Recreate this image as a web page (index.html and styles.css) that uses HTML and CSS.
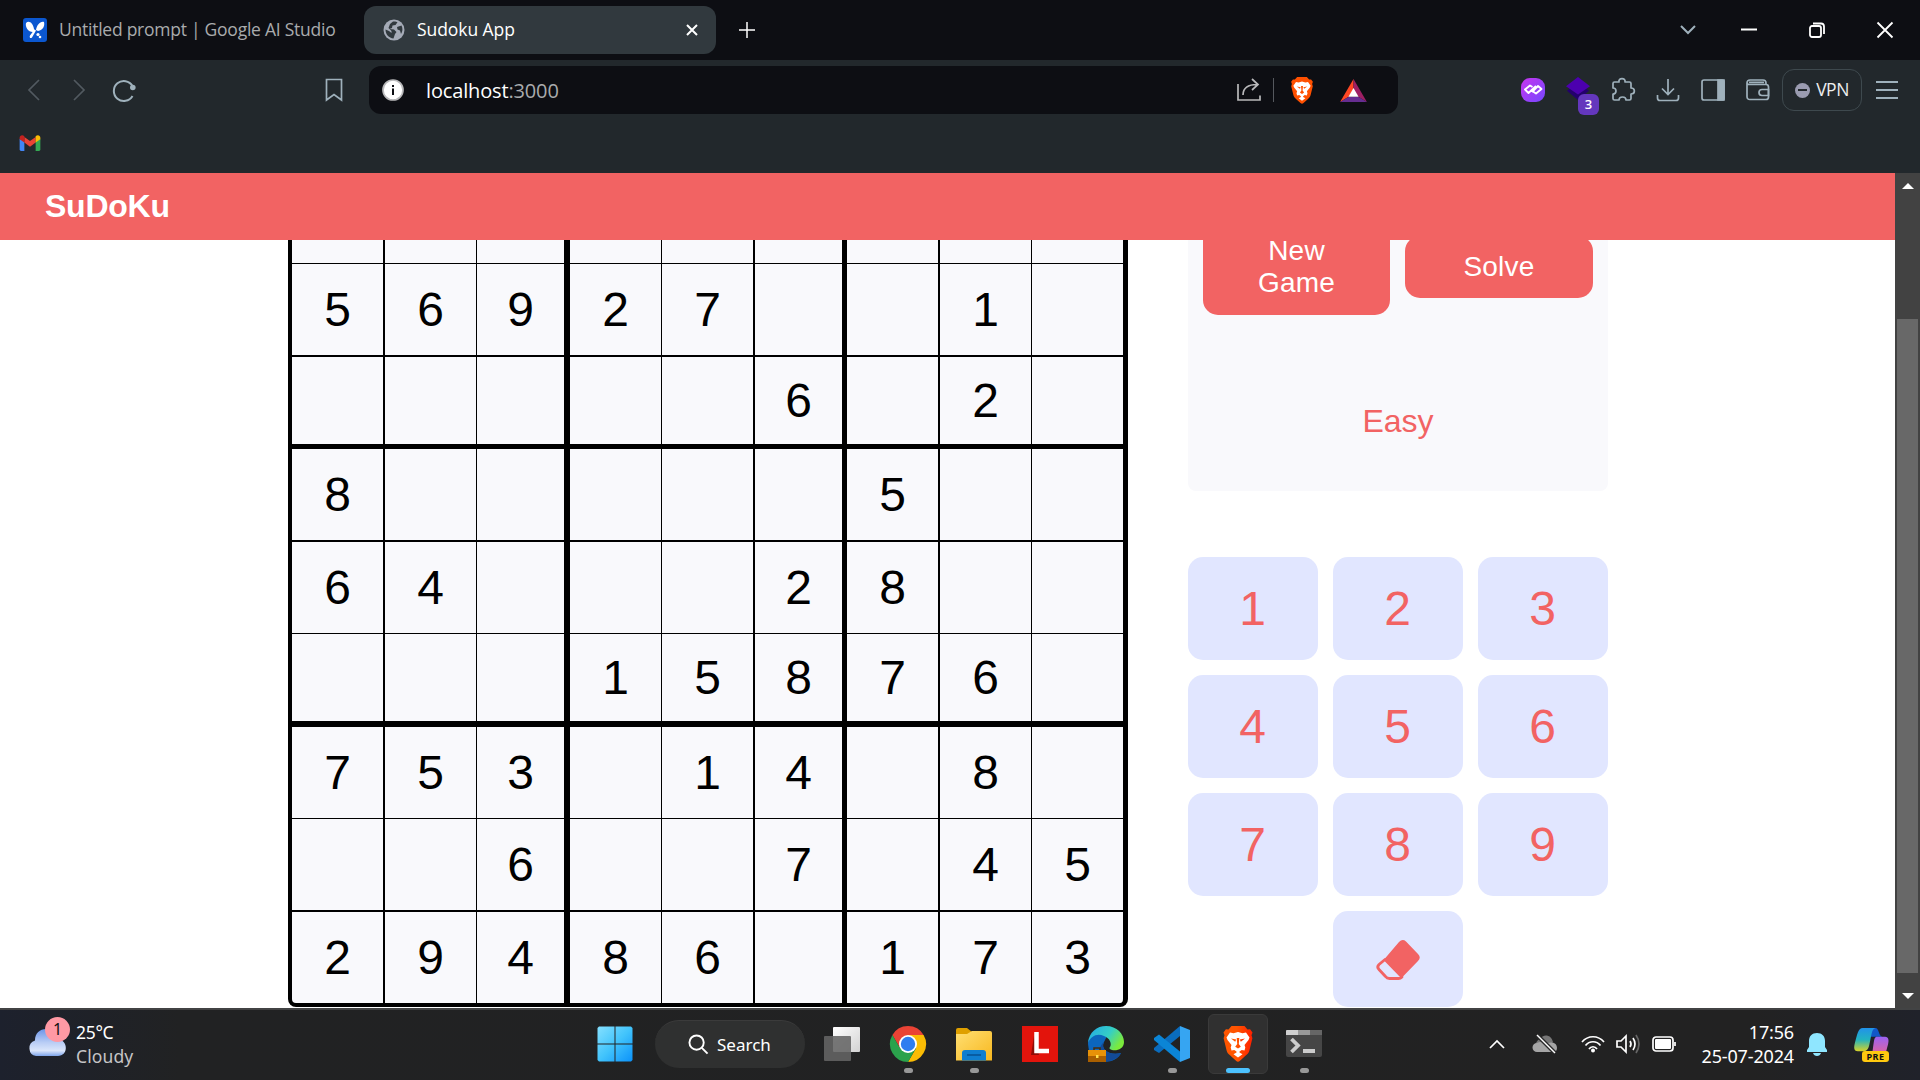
FILE: index.html
```html
<!DOCTYPE html>
<html lang="en">
<head>
<meta charset="utf-8">
<title>Sudoku App</title>
<link rel="stylesheet" href="styles.css">
</head>
<body>
<svg class="defs" width="0" height="0" aria-hidden="true">
  <defs>
    <linearGradient id="lionFill" x1="0" x2="1" y1="0" y2="0"><stop offset="0" stop-color="#f50"/><stop offset=".45" stop-color="#f50"/><stop offset="1" stop-color="#ff2000"/></linearGradient>
    <symbol id="lion" viewBox="0 0 30 36">
      <path d="M8.500 0h13l3 3.400 2.600-.2 2.400 3.200-1 2.800.9 3-3 12.200c-.5 2-1.700 3.600-3.400 4.800l-6 5.600c-1.300 1.200-2.700 1.200-4 0l-6-5.600c-1.700-1.200-2.900-2.800-3.400-4.800L.6 12.200l.9-3-1-2.800 2.400-3.200 2.600.2z"/>
      <path fill="#fff" d="M7 6.500l3.500.7L15 6l4.500 1.200 3.500-.7 3.500 5-1 2.500-4 5 .8 2.500-.8 3-2.800-.6-2.200 1.600v1l3 1.800-4.500 3.200-4.500-3.200 3-1.800v-1l-2.200-1.600-2.800.6-.8-3 .8-2.500-4-5-1-2.500z"/>
      <path d="M8 12.500l5.200 1-1 2.200zM22 12.500l-5.200 1 1 2.200zM13.700 12h2.600l-.5 6 2 2.700L15 22.500l-2.800-1.800 2-2.700z"/>
    </symbol>
  </defs>
</svg>
<div class="screen">
  <header class="tabs">
    <div class="tab">
      <svg class="studio" viewBox="0 0 24 24"><rect width="24" height="24" rx="3" fill="#0b57d0"/><path fill="#fff" d="M3 5c3-3 7 0 8 6l1 2-2 1C5 14 2 9 3 5zM21 4c1 4-1 8-6 9l-2-1c1-5 4-9 8-8zM11.500 11.500l1.500 1-4 7c-1.500 1.500-3 0-2-2z"/><circle cx="15" cy="16.500" r="1.600" fill="#fff"/><circle cx="17" cy="19" r="1.300" fill="#fff"/></svg>
      <span class="tab-title untitled">Untitled prompt | Google AI Studio</span>
    </div>
    <div class="tab active">
      <svg class="globe" viewBox="0 0 22 22"><circle cx="11" cy="11" r="10.500" fill="#a5abb7"/><path fill="#31393e" d="M10 2.500c1.500-.3 3.500 0 4.500.7L12.500 6l-3 .5-.5 2.500-2.500 1 4.500.5 2.500 2.500-1.500 2-1.500 4.500C6 19 2.500 15.500 2.500 10.500L6 12l2.500 2v-2l-3-3 1.500-4zM14 8l4.500-1.500c1.500 3 1.200 6-.5 8.500l-1-3.500-2.500-1z"/></svg>
      <span class="tab-title">Sudoku App</span>
      <svg class="close" viewBox="0 0 12 12"><path d="M1 1l10 10M11 1L1 11"/></svg>
    </div>
    <svg class="plus" viewBox="0 0 16 16"><path d="M8 0v16M0 8h16"/></svg>
    <div class="window-controls">
      <svg class="chev" viewBox="0 0 16 10"><path d="M1 1l7 7 7-7"/></svg>
      <svg viewBox="0 0 16 16"><path d="M0 7.500h16" stroke-width="2"/></svg>
      <svg viewBox="0 0 16 16"><rect x="1" y="4" width="11" height="11" rx="2" stroke-width="1.800"/><path d="M4 1.500h8a3 3 0 013 3V12" stroke-width="1.800"/></svg>
      <svg viewBox="0 0 16 16"><path d="M.5.5l15 15M15.500.5l-15 15" stroke-width="1.800"/></svg>
    </div>
  </header>
  <nav class="toolbar">
    <div class="nav-icons">
      <svg class="dim" viewBox="0 0 24 24"><path d="M17 2L7 12l10 10"/></svg>
      <svg class="dim" viewBox="0 0 24 24"><path d="M7 2l10 10L7 22"/></svg>
      <svg viewBox="0 0 24 24"><path d="M20.500 18A10 10 0 1120.500 8" stroke-width="2"/><circle cx="20.800" cy="9.500" r="2.800" fill="#9fb1bc" stroke="none"/></svg>
    </div>
    <svg class="bookmark" viewBox="0 0 20 24"><path d="M2.500 1.500h15v20.500L10 16.500 2.500 22z"/></svg>
    <div class="address">
      <svg class="info" viewBox="0 0 20 20"><circle cx="10" cy="10" r="10" fill="#fff"/><path d="M10 8.500V15M10 5v2" stroke="#0d0e13" stroke-width="2"/></svg>
      <span class="url">localhost<span>:3000</span></span>
      <svg class="share" viewBox="0 0 26 26"><path d="M2 7v16h22v-4.500M7 18C7 11 12 7.500 21 7.500M16 2l6 5.500-6 5.500"/></svg>
      <i class="divider"></i>
      <svg class="lion-small"><use href="#lion"/></svg>
      <svg class="bat" viewBox="0 0 28 24"><path fill="#ff4724" d="M14 0L0 24l9-5.500 5-8z"/><path fill="#9e1f63" d="M14 0l14 24-9-5.500-5-8z"/><path fill="#662d91" d="M0 24h28l-9-5.500H9z"/><path fill="#fff" d="M14 9.500l-5.300 9h10.600z"/></svg>
    </div>
    <div class="extensions">
      <svg viewBox="0 0 24 24"><defs><linearGradient id="violet" x2="1" y2="1"><stop stop-color="#c735ef"/><stop offset="1" stop-color="#7548ff"/></linearGradient></defs><rect width="24" height="24" rx="9" fill="url(#violet)" stroke="none"/><path stroke="#fff" stroke-width="1.900" stroke-linejoin="round" d="M11.500 9L9 7.500l-5 4 3.500 3.500L15 8M12 13.500l3 2 5.500-4.500-3.500-3-6 6"/></svg>
      <div class="badge-icon">
        <svg viewBox="0 0 26 26"><path fill="#23006d" stroke="none" d="M1 15l12-9 12 9-12 10z"/><path fill="#4c00af" stroke="none" d="M0 10L13 0l13 10-13 9z"/></svg>
        <span class="badge">3</span>
      </div>
      <svg viewBox="0 0 24 24"><path stroke-linejoin="round" d="M2 5.500q0-1.500 1.500-1.500H8C7-.5 15-.5 14 4h4.500Q20 4 20 5.500V10c4.500 0 4.500 6 0 6v4.500q0 1.500-1.500 1.500H15c0-4-7-4-7 0H3.500Q2 22 2 20.500V16c4 0 4-6 0-6z"/></svg>
      <svg viewBox="0 0 24 24"><path d="M12 1v15M6 10.500l6 6 6-6M1.500 17v3a2.500 2.500 0 002.500 2.500h16a2.500 2.500 0 002.500-2.500v-3"/></svg>
      <svg viewBox="0 0 24 24"><rect x="1" y="2" width="22" height="20" rx="2"/><path fill="#9fb1bc" d="M17 2h6v20h-6z"/></svg>
      <svg viewBox="0 0 24 24"><path d="M1 5Q1 2 4 2h13q3 0 3 3v1.500M1 5q0 1.500 2.500 1.500H20q2.500 0 2.500 2.500v10q0 2.500-2.500 2.500H4q-3 0-3-3zM3 4.300h15"/><path d="M22.500 11.500H16a2.500 2.500 0 000 6h6.500z"/></svg>
    </div>
    <div class="vpn"><i></i><span>VPN</span></div>
    <svg class="burger" viewBox="0 0 22 18"><path d="M0 1h22M0 9h22M0 17h22"/></svg>
  </nav>
  <div class="bookmarks">
    <svg viewBox="0 0 22 17"><path fill="#4285f4" d="M0 4v11.500Q0 17 1.500 17H5V7z"/><path fill="#34a853" d="M22 4v11.500q0 1.500-1.500 1.500H17V7z"/><path fill="#ea4335" d="M5 2l6 4.500L17 2v6l-6 4.500L5 8z"/><path fill="#c5221f" d="M0 3C0 .3 3-.5 5 1.200V8L0 4.500z"/><path fill="#fbbc04" d="M22 3c0-2.700-3-3.500-5-1.800V8l5-3.500z"/></svg>
  </div>
  <div class="viewport">
    <div class="page">
      <div class="app-bar"><h1>SuDoKu</h1></div>
      <main class="game">
        <div class="board">
          <b></b><b></b><b></b><b></b><b></b><b></b><b></b><b></b><b></b>
          <b>5</b><b>6</b><b>9</b><b>2</b><b>7</b><b></b><b></b><b>1</b><b></b>
          <b></b><b></b><b></b><b></b><b></b><b>6</b><b></b><b>2</b><b></b>
          <b>8</b><b></b><b></b><b></b><b></b><b></b><b>5</b><b></b><b></b>
          <b>6</b><b>4</b><b></b><b></b><b></b><b>2</b><b>8</b><b></b><b></b>
          <b></b><b></b><b></b><b>1</b><b>5</b><b>8</b><b>7</b><b>6</b><b></b>
          <b>7</b><b>5</b><b>3</b><b></b><b>1</b><b>4</b><b></b><b>8</b><b></b>
          <b></b><b></b><b>6</b><b></b><b></b><b>7</b><b></b><b>4</b><b>5</b>
          <b>2</b><b>9</b><b>4</b><b>8</b><b>6</b><b></b><b>1</b><b>7</b><b>3</b>
        </div>
        <aside class="side">
          <section class="panel">
            <div class="actions"><button>New Game</button><button>Solve</button></div>
            <p class="level">Easy</p>
          </section>
          <section class="keypad">
            <button>1</button><button>2</button><button>3</button>
            <button>4</button><button>5</button><button>6</button>
            <button>7</button><button>8</button><button>9</button>
            <button class="erase" aria-label="Erase"><svg viewBox="0 0 44 40"><path fill="none" stroke="#f26363" stroke-width="2.800" stroke-linejoin="round" d="M9 19.500l-6 5q-2.500 2.500 0 5l6.500 7q1.500 2 4 2h9q2 0 3.500-1.500z"/><path fill="#f26363" d="M8.500 19L23 2Q26.500-1.500 30 1.500l12 12.500q3.500 3.500 0 7L25.500 38z"/></svg></button>
          </section>
        </aside>
      </main>
    </div>
    <div class="scrollbar"><i class="up"></i><i class="thumb"></i><i class="down"></i></div>
  </div>
  <footer class="taskbar">
    <div class="weather">
      <div class="cloud">
        <svg viewBox="0 0 38 27"><defs><linearGradient id="cloudFill" x2="0" y2="1"><stop stop-color="#6a94e8"/><stop offset=".5" stop-color="#b9cdf5"/><stop offset=".8" stop-color="#dbe6fb"/><stop offset="1" stop-color="#7ea4ea"/></linearGradient></defs><path fill="url(#cloudFill)" d="M8 27a8 8 0 01-1-15.500C7 4 12 0 18 0c7 0 11 5 12 10 11 2 10 17 0 17z"/></svg>
        <span class="count">1</span>
      </div>
      <div class="forecast"><span>25°C</span><span class="sky">Cloudy</span></div>
    </div>
    <div class="apps">
      <div class="app"><svg viewBox="0 0 36 36"><defs><linearGradient id="winFill" x2="1" y2="1"><stop stop-color="#85e0ff"/><stop offset=".5" stop-color="#42c4fc"/><stop offset="1" stop-color="#0b92fa"/></linearGradient></defs><path fill="url(#winFill)" d="M2 .5h15.500v17H.5V2zM18.500.5H34L35.500 2v15.500h-17zM.5 18.500h17v17H2L.5 34zM18.500 18.500h17V34L34 35.500H18.500z"/></svg></div>
      <div class="search"><svg viewBox="0 0 22 22"><circle cx="9" cy="9" r="7.500"/><path d="M14.500 14.500l6 6"/></svg><span>Search</span></div>
      <div class="app"><svg viewBox="0 0 36 36"><defs><linearGradient id="taskFill" x2="1" y2="1"><stop stop-color="#fff"/><stop offset="1" stop-color="#d2d2d2"/></linearGradient></defs><rect x="9" y="1" width="27" height="25" rx="1" fill="url(#taskFill)"/><rect y="10" width="27" height="25" rx="1" fill="#646464" opacity=".88"/></svg></div>
      <div class="app running"><svg viewBox="0 0 36 36"><path fill="#ea4335" d="M2.400 9A18 18 0 0133.600 9H18l-7.800 13.500z"/><path fill="#fbbc04" d="M33.600 9A18 18 0 0118 36l7.800-13.500L18 9z"/><path fill="#2ba24c" d="M2.400 9A18 18 0 0018 36l7.800-13.500H10.200z"/><circle cx="18" cy="18" r="9" fill="#fff"/><circle cx="18" cy="18" r="7.200" fill="#2f7df0"/></svg></div>
      <div class="app running"><svg viewBox="0 0 36 36"><defs><linearGradient id="folderFill" x2="1" y2="1"><stop stop-color="#ffdf73"/><stop offset="1" stop-color="#f8b81f"/></linearGradient></defs><path fill="#dfa000" d="M0 4q0-2 2-2h9l5 4v4H0z"/><path fill="url(#folderFill)" d="M0 8h11l5-3h18q2 0 2 2v27.500H0z"/><path fill="#0f7ed0" d="M6 34.500V27q0-3 3-3h18q3 0 3 3v7.500z"/><path stroke="#075293" stroke-width="1.500" d="M11 29h14"/></svg></div>
      <div class="app"><svg viewBox="0 0 36 36"><path fill="#e3140c" d="M0 0h36v36H0z"/><path fill="#8f0d07" d="M12 10L9 29l8 0z"/><path fill="none" stroke="#fff" stroke-width="4.500" d="M14.500 6v19H27"/></svg></div>
      <div class="app"><svg viewBox="0 0 36 36"><defs><linearGradient id="edgeTop" x2="1" y2=".5"><stop stop-color="#22a8e8"/><stop offset=".6" stop-color="#35cfc5"/><stop offset="1" stop-color="#7bea3c"/></linearGradient></defs><path fill="#0c66bd" d="M0 18C0 8 12 5 19 10l-3 6c-4 7 5 14 17 11-5 11-26 13-32-2z"/><path fill="#124a97" d="M16 16c-4 7 5 14 17 11-5 9-18 11-21 4-2-5 0-12 4-15z"/><path fill="url(#edgeTop)" d="M0 17C1 6 9 0 18 0c11 0 18 8 18 16 0 7-7 9-12 8-3-1-3-2-2-3 2-3 0-9-6-11-7-3-13 0-16 7z"/><path fill="#e79208" d="M0 24h18v12H0z"/><path fill="#a95f00" d="M0 30h18v6H0z"/><path fill="none" stroke="#4a2c08" stroke-width="1.500" d="M6 24v-2h6v2"/><path fill="#ffe04d" d="M8 29h2.500v3H8z"/></svg></div>
      <div class="app running"><svg viewBox="0 0 36 36"><path fill="#0a6cbd" d="M26 0v10L5 27l-5-3v-2z"/><path fill="#0b85d6" d="M0 12l5-3.500 21 17V36L0 14z"/><path fill="#36a5f2" d="M26 0l10 4v28l-10 4z"/></svg></div>
      <div class="app running current"><svg class="lion-large"><use href="#lion"/></svg></div>
      <div class="app running"><svg viewBox="0 0 36 36"><path fill="#464646" d="M0 4h36v25q0 2-2 2H2q-2 0-2-2z"/><path fill="#d0d0d0" d="M0 9V5q0-1 1-1h11v5z"/><path fill="#999" d="M12 4h12v5H12z"/><path fill="#666" d="M24 4h12v5H24z"/><path fill="none" stroke="#ccc" stroke-width="3.800" d="M5.500 13l6.500 6.500L5.500 26M17 25h12"/></svg></div>
    </div>
    <div class="tray">
      <svg class="caret" viewBox="0 0 16 10"><path d="M1 9l7-7 7 7"/></svg>
      <svg class="cloud-off" viewBox="0 0 24 20"><path fill="#777" stroke="none" d="M3 9c2-4 4-4 4-4 3-5 11-5 13 3l-6 5z"/><path fill="#a5a5a5" stroke="none" d="M4 18a4.500 4.500 0 010-9c3-2 7-1 9 2 3-4 11-3 11 3 0 3-2 4-4 4z"/><path stroke="#292929" stroke-width="4" d="M4 1l18 18"/><path stroke-width="1.500" d="M4 1l18 18"/></svg>
      <svg class="wifi" viewBox="0 0 24 18"><path d="M1 7c6-7 16-7 22 0M4.500 10.500c4-5 11-5 15 0M8 14c2-3 6-3 8 0"/><circle cx="12" cy="15.500" r="2" fill="#fff" stroke="none"/></svg>
      <svg class="sound" viewBox="0 0 24 20"><path d="M1 7h4l5-5v16l-5-5H1zM14 7q2 3 0 6M17 4q4 6 0 12"/><path stroke="#666" d="M20 1q6 9 0 18"/></svg>
      <svg class="battery" viewBox="0 0 24 16"><rect x="1" y="1" width="20" height="14" rx="3"/><rect x="3" y="3" width="16" height="10" rx="1" fill="#fff" stroke="none"/><path d="M23 6v4"/></svg>
      <div class="clock"><span>17:56</span><span>25-07-2024</span></div>
      <svg class="bell" viewBox="0 0 20 23"><path fill="#8fe6ff" d="M10 0c5 0 8 3 8 8v6l2 3v2H0v-2l2-3V8c0-5 3-8 8-8zM6 20h8q-1 3-4 3t-4-3z"/></svg>
      <div class="copilot">
        <svg viewBox="0 0 36 34"><defs><linearGradient id="coA" x2="0" y2="1"><stop stop-color="#2192ea"/><stop offset=".5" stop-color="#22b3c0"/><stop offset="1" stop-color="#d9d326"/></linearGradient><linearGradient id="coB" x2="0" y2="1"><stop stop-color="#9b62f4"/><stop offset="1" stop-color="#f7657e"/></linearGradient></defs><path fill="#1157c9" d="M17 0h5c4 0 3 8 7 9H17z"/><path fill="url(#coA)" d="M9 0h13c-4 1-4 8-6 16-1 6-3 8-6 8H4c-5 0-4-5-3-9C3 8 4 0 9 0z"/><path fill="url(#coB)" d="M24 9h8c4 0 4 4 3 8-2 7-3 16-10 16H14c5-2 5-9 6-16 1-6 1-8 4-8z"/></svg>
        <span class="pre">PRE</span>
      </div>
    </div>
  </footer>
</div>
</body>
</html>
```
FILE: styles.css
```css
* { box-sizing: border-box; }
body { margin: 0; overflow: hidden; font-family: "Open Sans", "Noto Sans", sans-serif; }
svg { display: block; flex: none; fill: none; overflow: visible; }
.defs { position: absolute; }
.screen { width: 1920px; height: 1080px; display: flex; flex-direction: column; overflow: hidden; }

/* Tab strip */
.tabs { height: 60px; flex: none; background: #0d0e13; display: flex; align-items: center; }
.tab { width: 364px; height: 48px; display: flex; align-items: center; padding-left: 23px; color: #a9abad; }
.active { width: 352px; background: #31393e; border-radius: 12px; padding: 0 18px 0 19px; color: #fff; }
.tab-title { font-size: 17.500px; margin-left: 12px; padding-bottom: 2px; white-space: nowrap; letter-spacing: -.06px; }
.untitled { letter-spacing: -.25px; }
.studio { width: 24px; height: 24px; }
.globe { width: 22px; height: 22px; }
.close { width: 12px; height: 12px; margin-left: auto; stroke: #fff; stroke-width: 2; }
.plus { width: 16px; height: 16px; margin-left: 23px; stroke: #fff; stroke-width: 1.500; }
.window-controls { margin-left: auto; display: flex; align-items: center; gap: 52px; padding-right: 27px; stroke: #fff; }
.window-controls svg { width: 16px; height: 16px; }
.window-controls .chev { width: 16px; height: 10px; stroke: #9fb1bc; stroke-width: 2; margin-right: -7px; }

/* Toolbar */
.toolbar { height: 60px; flex: none; background: #22282c; display: flex; align-items: center; stroke: #9fb1bc; stroke-width: 1.700; }
.nav-icons { display: flex; gap: 21px; padding-left: 22px; }
.nav-icons svg { width: 24px; height: 24px; }
.nav-icons .dim { stroke: #525a60; }
.bookmark { width: 20px; height: 24px; margin-left: 188px; }
.address { width: 1029px; height: 48px; margin-left: 25px; background: #0d0e13; border-radius: 12px; display: flex; align-items: center; padding: 0 31px 0 14px; stroke: #b9b9bb; }
.info { width: 20px; height: 20px; }
.url { margin-left: 23px; font-size: 20px; color: #fff; letter-spacing: -.15px; }
.url span { color: #a9abad; }
.share { width: 26px; height: 26px; margin-left: auto; }
.divider { width: 1.500px; height: 24px; background: #55585e; margin-left: 11px; }
.lion-small { width: 24px; height: 27px; margin-left: 16px; stroke: none; fill: #ff5000; }
.bat { width: 27px; height: 23px; margin-left: 26px; stroke: none; }
.extensions { display: flex; gap: 21px; margin-left: 123px; align-items: center; }
.extensions > svg { width: 24px; height: 24px; }
.badge-icon { width: 24px; position: relative; }
.badge-icon svg { width: 24px; height: 24px; margin-top: -3px; }
.badge { position: absolute; left: 12px; top: 14px; width: 21px; height: 21px; border-radius: 6px; background: #6437bd; color: #fff; font-size: 13px; font-weight: 600; line-height: 21px; text-align: center; }
.vpn { width: 80px; height: 42px; margin-left: 12px; border: 1.500px solid #3e494e; border-radius: 12px; display: flex; align-items: center; justify-content: center; gap: 6px; color: #eee; font-size: 17.500px; letter-spacing: -.5px; }
.vpn span { padding-bottom: 2px; }
.vpn i { width: 15px; height: 15px; border-radius: 50%; background: #9a9bb0; display: flex; align-items: center; justify-content: center; }
.vpn i::after { content: ""; width: 9px; height: 2px; background: #22282c; }
.burger { width: 22px; height: 18px; margin-left: 14px; stroke-width: 2; }
.bookmarks { height: 53px; flex: none; background: #22282c; padding: 15px 19px; }
.bookmarks svg { width: 22px; height: 16px; }

/* Web page */
.viewport { height: 835px; flex: none; display: flex; background: #fff; font-family: Arial, "Liberation Sans", sans-serif; }
.page { width: 1895px; }
.app-bar { height: 67px; background: #f26363; display: flex; align-items: center; padding: 0 0 2px 45px; position: relative; z-index: 1; }
.app-bar h1 { margin: 0; color: #fff; font-size: 32px; line-height: 36px; letter-spacing: -.25px; }
.game { height: 768px; display: flex; gap: 60px; padding-left: 288px; }
.board {
  height: 767px; width: 840px; background: #f9f9fc; border: solid #000; border-width: 0 5px 4px 4px; border-radius: 0 0 8px 8px; overflow: hidden;
  display: grid; grid-template-columns: 93px 92px 93px 92px 93px 92px 93px 92px 91px; grid-template-rows: 24px 93px 92px 93px 92px 93px 92px 93px 91px;
}
.board b { border: 0 solid #000; font-size: 48px; font-weight: 400; line-height: 1; display: flex; align-items: center; justify-content: center; }
.board b:nth-child(9n+1), .board b:nth-child(9n+5), .board b:nth-child(9n+7) { border-right-width: 2px; }
.board b:nth-child(9n+2), .board b:nth-child(9n+4), .board b:nth-child(9n+8) { border-right-width: 1px; }
.board b:nth-child(9n+3) { border-right-width: 6px; }
.board b:nth-child(9n+6) { border-right-width: 5px; }
.board b:nth-child(-n+72) { border-bottom-width: 2px; }
.board b:nth-child(-n+63) { border-bottom-width: 1px; }
.board b:nth-child(-n+54) { border-bottom-width: 6px; }
.board b:nth-child(-n+45) { border-bottom-width: 1px; }
.board b:nth-child(-n+36) { border-bottom-width: 2px; }
.board b:nth-child(-n+27) { border-bottom-width: 5px; }
.board b:nth-child(-n+18) { border-bottom-width: 2px; }
.board b:nth-child(-n+9) { border-bottom-width: 1px; }
.side { width: 420px; }
.panel { display: flow-root; height: 251px; background: #f9f9fc; border-radius: 0 0 8px 8px; }
button { border: 0; margin: 0; font-family: inherit; border-radius: 15px; }
.actions { display: grid; grid-template-columns: 187px 188px; align-items: center; gap: 15px; height: 96px; margin-top: -21px; padding: 0 15px; }
.actions button { background: #f26363; color: #fff; font-size: 28px; line-height: 32.500px; letter-spacing: .2px; padding: 15px 30px; }
.level { margin: 88px 0 0; text-align: center; font-size: 32px; line-height: 36px; color: #f26363; }
.keypad { margin-top: 66px; display: grid; grid-template-columns: repeat(3, 130px); grid-template-rows: repeat(3, 103px) 96px; gap: 15px; }
.keypad button { background: #e1e6ff; color: #f26363; font-size: 48px; line-height: 1; padding: 0 1px 0 0; }
.keypad .erase { grid-column: 2; display: flex; align-items: center; justify-content: center; }
.erase svg { width: 44px; height: 40px; margin-top: 2px; }
.scrollbar { width: 25px; background: #424242; display: flex; flex-direction: column; align-items: center; }
.scrollbar .up { width: 0; border: 6px solid transparent; border-top: 0; border-bottom: 6px solid #fff; margin-top: 10px; }
.scrollbar .thumb { width: 21px; height: 654px; background: #686868; margin-top: 130px; }
.scrollbar .down { width: 0; border: 6px solid transparent; border-bottom: 0; border-top: 6px solid #fff; margin-top: 20px; }

/* Taskbar */
.taskbar { height: 72px; flex: none; background: linear-gradient(90deg, #1d212d 0, #212223 180px, #222 1750px, #20222a 100%); border-top: 2px solid #424344; display: flex; font-family: "Noto Sans", sans-serif; color: #fff; }
.weather { width: 564px; display: flex; padding: 6px 0 0 28px; }
.cloud { width: 48px; position: relative; }
.cloud svg { width: 38px; height: 27px; margin-top: 13px; }
.count { position: absolute; left: 17px; top: 1px; width: 25px; height: 25px; border-radius: 50%; background: #ff99a4; color: #111; text-align: center; font-size: 16px; line-height: 25px; }
.forecast { display: flex; flex-direction: column; font-size: 17.500px; line-height: 24px; letter-spacing: -.3px; padding-top: 4px; }
.sky { color: #c5c5c6; letter-spacing: .1px; }
.apps { display: flex; align-items: center; padding-left: 21px; height: 68px; gap: 6px; }
.app { width: 60px; height: 60px; display: flex; align-items: center; justify-content: center; position: relative; border-radius: 6px; }
.app svg { width: 36px; height: 36px; }
.running::after { content: ""; position: absolute; bottom: 1px; width: 9px; height: 5px; border-radius: 3px; background: #989898; }
.current { background: #303030; border: 1px solid #3a3a3a; }
.current::after { width: 24px; bottom: 0; background: #4cc2ff; }
.app .lion-large { width: 30px; height: 36px; fill: url(#lionFill); }
.search { width: 150px; height: 48px; border-radius: 24px; background: #2f3030; border-top: 1px solid #3b3b3b; display: flex; align-items: center; gap: 8px; padding-left: 33px; font-size: 17px; margin: 0 1px 0 4px; }
.search svg { width: 21px; height: 21px; stroke: #fff; stroke-width: 2; }
.tray { margin-left: auto; display: flex; align-items: center; height: 68px; stroke: #fff; stroke-width: 1.700; padding-right: 30px; }
.caret { width: 16px; height: 10px; margin-right: 28px; }
.cloud-off { width: 24px; height: 20px; margin-right: 24px; }
.wifi { width: 24px; height: 18px; margin-right: 11px; }
.sound { width: 24px; height: 20px; margin-right: 12px; }
.battery { width: 24px; height: 16px; }
.clock { width: 118px; display: flex; flex-direction: column; text-align: right; font-size: 18px; line-height: 24px; letter-spacing: -.15px; stroke: none; }
.bell { width: 20px; height: 23px; margin-left: 13px; stroke: none; }
.copilot { width: 36px; position: relative; margin-left: 27px; stroke: none; }
.copilot svg { width: 35px; height: 33px; }
.pre { position: absolute; left: 8px; top: 23px; width: 27px; height: 11px; border-radius: 3px; background: #ffc90f; color: #111; font-size: 9px; font-weight: 700; line-height: 11px; text-align: center; letter-spacing: .5px; }
```
